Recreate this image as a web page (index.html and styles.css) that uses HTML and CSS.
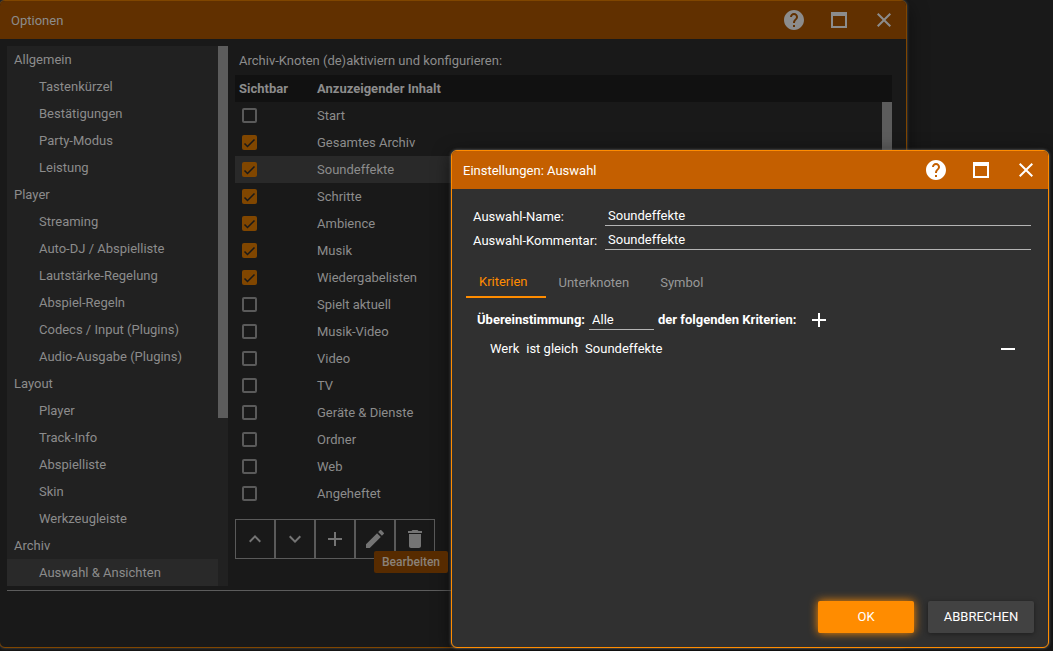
FILE: index.html
```html
<!DOCTYPE html>
<html lang="de">
<head>
<meta charset="utf-8">
<meta name="viewport" content="width=device-width, initial-scale=1">
<title>Optionen</title>
<link rel="stylesheet" href="styles.css">
</head>
<body>
<svg class="sprite" aria-hidden="true">
  <symbol id="help" viewBox="0 0 24 24"><path d="M12 2C6.480 2 2 6.480 2 12s4.480 10 10 10 10-4.480 10-10S17.520 2 12 2zm1 17h-2v-2h2v2zm2.070-7.750-.9.920C13.450 12.900 13 13.500 13 15h-2v-.5c0-1.100.450-2.100 1.170-2.830l1.240-1.260c.370-.360.590-.860.590-1.410 0-1.100-.9-2-2-2s-2 .9-2 2H8c0-2.210 1.790-4 4-4s4 1.790 4 4c0 .880-.360 1.680-.930 2.250z"/></symbol>
  <symbol id="maximize" viewBox="0 0 24 24"><path fill-rule="evenodd" d="M4 4h16v16H4zM6 8v10h12V8z"/></symbol>
  <symbol id="close" viewBox="0 0 24 24"><path d="M19 6.410 17.590 5 12 10.590 6.410 5 5 6.410 10.590 12 5 17.590 6.410 19 12 13.410 17.590 19 19 17.590 13.410 12z"/></symbol>
  <symbol id="up" viewBox="0 0 24 24"><path d="M7.410 15.410 12 10.830l4.590 4.580L18 14l-6-6-6 6z"/></symbol>
  <symbol id="down" viewBox="0 0 24 24"><path d="M7.410 8.590 12 13.170l4.590-4.580L18 10l-6 6-6-6z"/></symbol>
  <symbol id="plus" viewBox="0 0 24 24"><path d="M19 13h-6v6h-2v-6H5v-2h6V5h2v6h6z"/></symbol>
  <symbol id="minus" viewBox="0 0 24 24"><path d="M5 11h14v2H5z"/></symbol>
  <symbol id="edit" viewBox="0 0 24 24"><path d="M3 17.250V21h3.750L17.810 9.940l-3.750-3.750zM20.710 7.040a1 1 0 0 0 0-1.410l-2.340-2.340a1 1 0 0 0-1.410 0l-1.830 1.830 3.750 3.750z"/></symbol>
  <symbol id="trash" viewBox="0 0 24 24"><path d="M6 19c0 1.100.9 2 2 2h8c1.100 0 2-.9 2-2V7H6zM19 4h-3.500l-1-1h-5l-1 1H5v2h14z"/></symbol>
</svg>

<section class="window options" aria-label="Optionen">
  <header class="titlebar">
    <h1 class="title">Optionen</h1>
    <button class="tool" type="button" aria-label="Hilfe"><svg class="icon"><use href="#help"/></svg></button>
    <button class="tool" type="button" aria-label="Maximieren"><svg class="icon"><use href="#maximize"/></svg></button>
    <button class="tool" type="button" aria-label="Schließen"><svg class="icon"><use href="#close"/></svg></button>
  </header>
  <div class="options-body">
    <nav class="sidebar">
      <div class="tree">
        <a class="group" href="#">Allgemein</a>
        <a class="leaf" href="#">Tastenkürzel</a>
        <a class="leaf" href="#">Bestätigungen</a>
        <a class="leaf" href="#">Party-Modus</a>
        <a class="leaf" href="#">Leistung</a>
        <a class="group" href="#">Player</a>
        <a class="leaf" href="#">Streaming</a>
        <a class="leaf" href="#">Auto-DJ / Abspielliste</a>
        <a class="leaf" href="#">Lautstärke-Regelung</a>
        <a class="leaf" href="#">Abspiel-Regeln</a>
        <a class="leaf" href="#">Codecs / Input (Plugins)</a>
        <a class="leaf" href="#">Audio-Ausgabe (Plugins)</a>
        <a class="group" href="#">Layout</a>
        <a class="leaf" href="#">Player</a>
        <a class="leaf" href="#">Track-Info</a>
        <a class="leaf" href="#">Abspielliste</a>
        <a class="leaf" href="#">Skin</a>
        <a class="leaf" href="#">Werkzeugleiste</a>
        <a class="group" href="#">Archiv</a>
        <a class="leaf selected" href="#" aria-current="page">Auswahl &amp; Ansichten</a>
      </div>
      <div class="scrollbar"><div class="thumb"></div></div>
    </nav>
    <main class="panel">
      <h2 class="caption">Archiv-Knoten (de)aktiviern und konfigurieren:</h2>
      <div class="list">
        <table class="nodes">
          <thead><tr><th class="col-visible" scope="col">Sichtbar</th><th scope="col">Anzuzeigender Inhalt</th></tr></thead>
          <tbody>
            <tr><td><input class="check" type="checkbox" id="n1"></td><td><label for="n1">Start</label></td></tr>
            <tr><td><input class="check" type="checkbox" id="n2" checked></td><td><label for="n2">Gesamtes Archiv</label></td></tr>
            <tr class="selected"><td><input class="check" type="checkbox" id="n3" checked></td><td><label for="n3">Soundeffekte</label></td></tr>
            <tr><td><input class="check" type="checkbox" id="n4" checked></td><td><label for="n4">Schritte</label></td></tr>
            <tr><td><input class="check" type="checkbox" id="n5" checked></td><td><label for="n5">Ambience</label></td></tr>
            <tr><td><input class="check" type="checkbox" id="n6" checked></td><td><label for="n6">Musik</label></td></tr>
            <tr><td><input class="check" type="checkbox" id="n7" checked></td><td><label for="n7">Wiedergabelisten</label></td></tr>
            <tr><td><input class="check" type="checkbox" id="n8"></td><td><label for="n8">Spielt aktuell</label></td></tr>
            <tr><td><input class="check" type="checkbox" id="n9"></td><td><label for="n9">Musik-Video</label></td></tr>
            <tr><td><input class="check" type="checkbox" id="n10"></td><td><label for="n10">Video</label></td></tr>
            <tr><td><input class="check" type="checkbox" id="n11"></td><td><label for="n11">TV</label></td></tr>
            <tr><td><input class="check" type="checkbox" id="n12"></td><td><label for="n12">Geräte &amp; Dienste</label></td></tr>
            <tr><td><input class="check" type="checkbox" id="n13"></td><td><label for="n13">Ordner</label></td></tr>
            <tr><td><input class="check" type="checkbox" id="n14"></td><td><label for="n14">Web</label></td></tr>
            <tr><td><input class="check" type="checkbox" id="n15"></td><td><label for="n15">Angeheftet</label></td></tr>
          </tbody>
        </table>
        <div class="scrollbar list-scroll"><div class="thumb"></div></div>
      </div>
      <div class="actions">
        <button class="action" type="button" aria-label="Nach oben"><svg class="icon"><use href="#up"/></svg></button>
        <button class="action" type="button" aria-label="Nach unten"><svg class="icon"><use href="#down"/></svg></button>
        <button class="action" type="button" aria-label="Hinzufügen"><svg class="icon"><use href="#plus"/></svg></button>
        <button class="action" type="button" aria-describedby="tip"><svg class="icon"><use href="#edit"/></svg><span class="tooltip" id="tip" role="tooltip">Bearbeiten</span></button>
        <button class="action" type="button" aria-label="Löschen"><svg class="icon"><use href="#trash"/></svg></button>
      </div>
    </main>
  </div>
</section>

<section class="window dialog" role="dialog" aria-label="Einstellungen: Auswahl">
  <header class="titlebar">
    <h2 class="title">Einstellungen: Auswahl</h2>
    <button class="tool" type="button" aria-label="Hilfe"><svg class="icon"><use href="#help"/></svg></button>
    <button class="tool" type="button" aria-label="Maximieren"><svg class="icon"><use href="#maximize"/></svg></button>
    <button class="tool" type="button" aria-label="Schließen"><svg class="icon"><use href="#close"/></svg></button>
  </header>
  <form class="dialog-body">
    <div class="fields">
      <label for="name">Auswahl-Name:</label><input class="field" id="name" type="text" value="Soundeffekte">
      <label for="comment">Auswahl-Kommentar:</label><input class="field" id="comment" type="text" value="Soundeffekte">
    </div>
    <div class="tabs" role="tablist">
      <button class="tab active" type="button" role="tab" aria-selected="true">Kriterien</button>
      <button class="tab" type="button" role="tab">Unterknoten</button>
      <button class="tab" type="button" role="tab">Symbol</button>
    </div>
    <div class="match">
      <label for="mode">Übereinstimmung:</label>
      <select class="field mode" id="mode"><option>Alle</option></select>
      <span>der folgenden Kriterien:</span>
      <button class="plain" type="button" aria-label="Kriterium hinzufügen"><svg class="icon"><use href="#plus"/></svg></button>
    </div>
    <div class="criterion">
      <span>Werk</span><span>ist gleich</span><span>Soundeffekte</span>
      <button class="plain remove" type="button" aria-label="Kriterium entfernen"><svg class="icon"><use href="#minus"/></svg></button>
    </div>
    <footer class="buttons">
      <button class="btn primary" type="submit">OK</button>
      <button class="btn" type="button">ABBRECHEN</button>
    </footer>
  </form>
</section>
</body>
</html>
```
FILE: styles.css
```css
* { box-sizing: border-box; }

body {
  margin: 0;
  min-height: 100vh;
  overflow: hidden;
  background: #191919;
  font: 13px/18px Roboto, "Liberation Sans", sans-serif;
}

button, input, select { font: inherit; color: inherit; }
button { padding: 0; border: 0; background: none; }
a { color: inherit; text-decoration: none; }

.sprite { display: none; }
.icon { display: block; width: 24px; height: 24px; fill: currentColor; }

/* Windows */
.window {
  position: absolute;
  display: flex;
  flex-direction: column;
  border: 1px solid;
  border-radius: 6px;
}
.options {
  inset: 0 146px 3px -1px;
  border-color: #804600;
  background: #191919;
  color: #8c8c8c;
  box-shadow: 0 0 3px #555, 4px 6px 18px rgba(0, 0, 0, .35);
}
.dialog {
  inset: 150px 4px 3px 451px;
  border-color: #ff8c00;
  background: #303030;
  color: #fff;
  box-shadow: 0 0 3px #777, 0 4px 18px rgba(0, 0, 0, .6);
}

.titlebar {
  display: flex;
  align-items: center;
  height: 38px;
  padding: 0 10px 0 11px;
  gap: 21px;
  border-radius: 5px 5px 0 0;
  background: #613000;
}
.dialog .titlebar { background: #c45f00; }
.title { flex: 1; margin: 0; padding-top: 2px; font-size: 13px; font-weight: 400; }

/* Options window */
.options-body {
  display: flex;
  gap: 7px;
  margin: 7px 7px 0;
  padding-bottom: 4px;
  border-bottom: 1px solid #5c5c5c;
}
.sidebar { display: flex; width: 221px; background: #212121; }
.tree { flex: 1; }
.group, .leaf { display: block; padding: 5px 7px 4px; }
.leaf { padding-left: 32px; }
.selected { background: #292929; }
.scrollbar { width: 10px; }
.thumb { height: 372px; background: #5c5c5c; }

.panel { flex: 1; padding-right: 7px; }
.caption { margin: 0; padding: 6px 4px 5px; font-size: 13px; font-weight: 400; }
.list { position: relative; }
.nodes { width: 100%; border-collapse: collapse; }
.nodes th, .nodes td { height: 27px; padding: 0 4px; text-align: left; }
.nodes td:first-child { padding-left: 7px; }
.nodes thead { background: #111; }
.nodes .col-visible { width: 78px; }
.list-scroll { position: absolute; top: 27px; right: 0; bottom: 0; }

.check {
  display: block;
  width: 15px;
  height: 15px;
  margin: 0;
  appearance: none;
  border: 2px solid #5a5a5a;
  border-radius: 2px;
}
.check:checked {
  border: 0;
  background: #804600 url("data:image/svg+xml,%3Csvg xmlns='http://www.w3.org/2000/svg' viewBox='0 0 15 15'%3E%3Cpath d='M2.500 8.500 5.500 11.500 12.500 4.500' fill='none' stroke='%23191919' stroke-width='1.500'/%3E%3C/svg%3E");
}

.actions { display: flex; margin: 12px 0 27px; }
.action {
  position: relative;
  display: grid;
  place-items: center;
  width: 40px;
  height: 40px;
  border: 1px solid #5a5a5a;
  color: #747474;
}
.tooltip {
  position: absolute;
  z-index: 1;
  top: 31px;
  left: 18px;
  padding: 2px 8px;
  border-radius: 2px;
  background: #572b00;
  color: #8a8178;
  font-size: 12px;
  font-weight: 500;
}

/* Settings dialog */
.dialog-body { flex: 1; display: flex; flex-direction: column; padding: 17px 14px 14px; }
.fields {
  display: grid;
  grid-template-columns: 132px 1fr;
  align-items: center;
  row-gap: 4px;
  margin: 0 3px 20px 7px;
}
.fields label { padding-top: 2px; }
.field {
  width: 100%;
  height: 20px;
  padding: 0 3px;
  border: 0;
  border-bottom: 1px solid #b4b4b4;
  border-radius: 0;
  background: none;
  appearance: none;
}
.tabs { display: flex; }
.tab { padding: 0 18px 2px 13px; height: 28px; color: #989898; }
.tab.active { border-bottom: 2px solid #ff8c00; color: #ff8c00; }
.match { display: flex; align-items: center; gap: 4px; margin: 10px 0 0 11px; font-weight: 700; }
.mode { width: 65px; font-weight: 400; }
.match .plain { margin-left: 7px; }
.criterion { display: flex; align-items: center; gap: 7px; margin: 5px 14px 0 24px; }
.remove { margin-left: auto; }

.buttons { display: flex; justify-content: flex-end; gap: 14px; margin-top: auto; }
.btn {
  height: 32px;
  width: 106px;
  border-radius: 2px;
  background: #424242;
  box-shadow: 0 1px 5px rgba(0, 0, 0, .4);
}
.btn.primary {
  width: 96px;
  background: #ff8c00;
  box-shadow: 0 0 10px #ff8c00;
}
```
